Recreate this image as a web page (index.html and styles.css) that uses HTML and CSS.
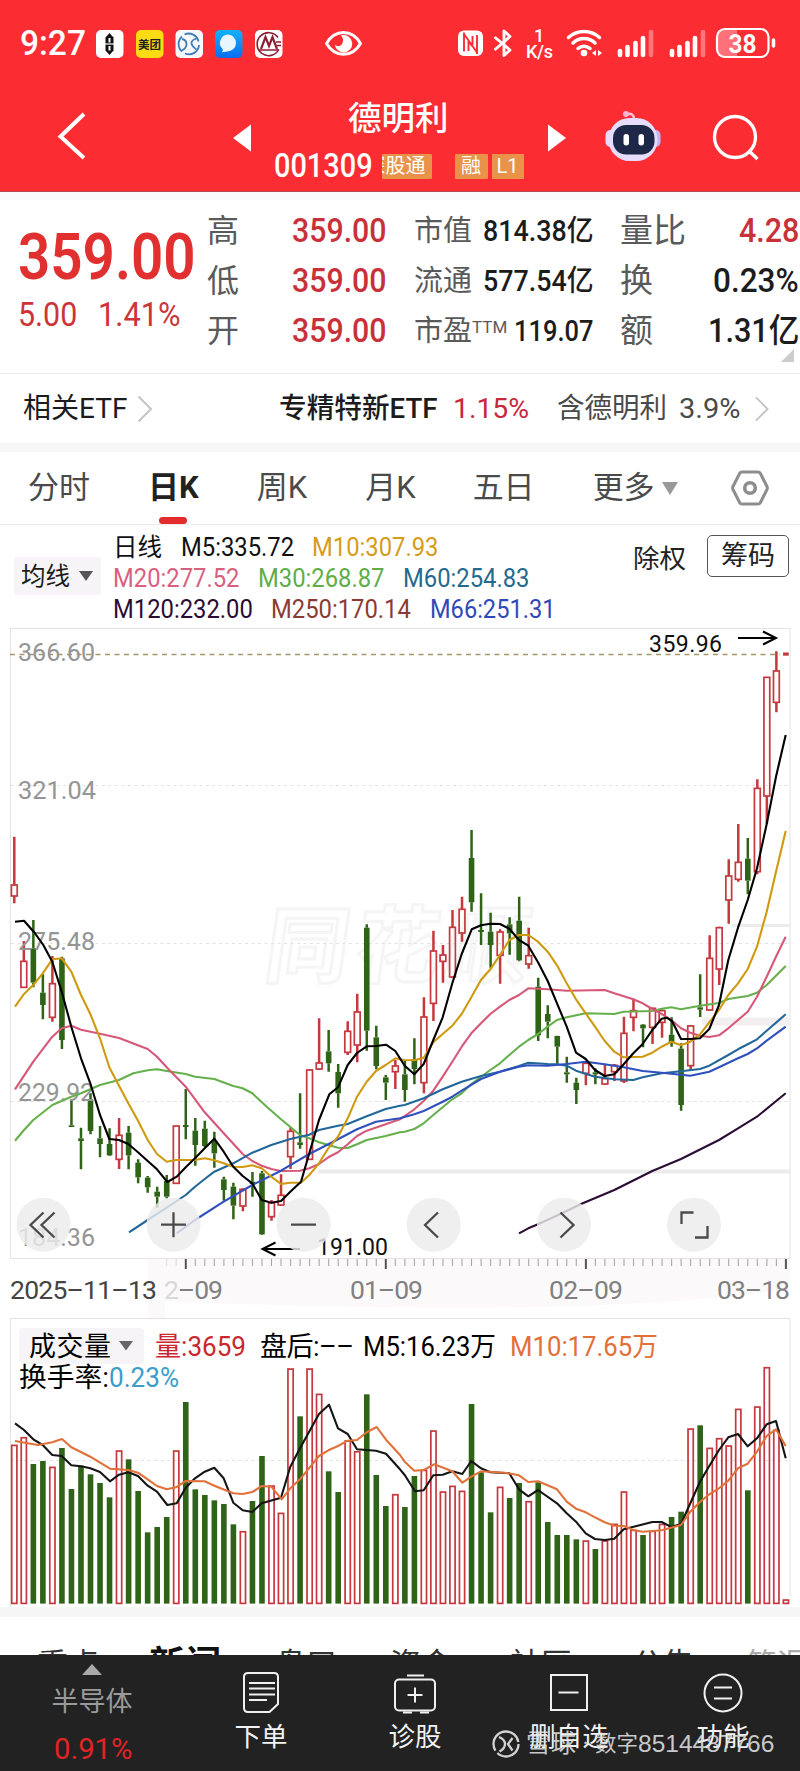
FILE: index.html
```html
<!DOCTYPE html>
<html lang="zh-CN">
<head>
<meta charset="utf-8">
<title>德明利 001309</title>
<link rel="stylesheet" href="styles.css">
</head>
<body>
<div class="app">
  <header class="top">
    <div class="status">
      <span class="clock" data-w="66">9:27</span>
      <svg class="apps" width="270" height="40" viewBox="94 23 270 40">
        <g>
          <rect x="96" y="29" width="27.5" height="28" rx="5" fill="#fff"/>
          <path d="M109.500 32l4 4.500v13l-4 4.500l-4-4.500v-13z" fill="#111"/>
          <path d="M109.500 37v4.500M109.500 45v4.500" stroke="#fff" stroke-width="2"/>
          <path d="M104 43h11" stroke="#fff" stroke-width="1.200"/>
        </g>
        <rect x="136" y="29" width="27.500" height="28" rx="5" fill="#fbdc12"/>
        <text x="138" y="47.500" class="mt" textLength="23">美团</text>
        <rect x="175.500" y="29" width="27.500" height="28" rx="5" fill="#f6f8fc"/>
        <g fill="none" stroke="#3d7db8" stroke-width="1.800">
          <path d="M182 35.500a10 10 0 0 0 0 15M184.500 33.500a10 10 0 0 1 14 7M199 44a10 10 0 0 1-14 8.500"/>
          <path d="M182 38q4.500 1 4.500 5t-4.500 6.500M196.500 37.500q-5 1.500-5 4.500t5 6.500"/>
        </g>
        <defs><linearGradient id="sky" x1="0" y1="0" x2="0" y2="1"><stop offset="0" stop-color="#12b2f8"/><stop offset="1" stop-color="#0a6df0"/></linearGradient></defs>
        <rect x="215" y="29" width="27.500" height="28" rx="5" fill="url(#sky)"/>
        <path d="M228 33.500a8.500 8.500 0 1 1 -1 17l-5 .8 1-2.800a8.500 8.500 0 0 1 5-15z" fill="#e8f7ff"/>
        <rect x="255" y="29" width="27.500" height="28" rx="5" fill="#fff"/>
        <g fill="none" stroke="#8d1f35">
          <path d="M278 36.500a11.500 11.500 0 1 0 .8 12" stroke-width="1.600"/>
          <path d="M261 48l4.500-12 3.500 9 3.500-9 4.500 12" stroke-width="2.200"/>
          <path d="M259 49h20M276 41h5M277 44.500h4" stroke-width="1.500"/>
        </g>
        <path d="M326.500 42.500c4-7 10-11 17-11s13 4 17 11c-4 7-10 10.800-17 10.800s-13-4-17-10.800z" fill="none" stroke="#fff" stroke-width="3"/>
        <path d="M343.500 34a8.700 8.700 0 1 1-8.600 9.500c2 2.500 6 2 7.500-1 1.300-3 .8-6-1.500-8z" fill="#fff"/>
      </svg>
      <svg class="sys" width="330" height="40" viewBox="454 23 330 40">
        <rect x="458" y="29.500" width="25" height="25.500" rx="6" fill="#fff"/>
        <path d="M464 31.500v19M477 34v19M464 33l13 18.500M468.500 50V40l4 5.500M472.500 35v9" fill="none" stroke="#fb2d33" stroke-width="1.900"/>
        <path d="M494.500 36l15.500 13-6 5.500V30l6 5.500-15.500 13.500" fill="none" stroke="#fff" stroke-width="2.900" stroke-linejoin="round"/>
        <text x="534" y="40.500" class="net">1</text>
        <text x="526" y="57" class="net" textLength="27">K/s</text>
        <g fill="none" stroke="#fff" stroke-width="3.500" stroke-linecap="round">
          <path d="M568.500 36.500a23 23 0 0 1 31 0M573 42a16 16 0 0 1 22 0M578 47.500a9 9 0 0 1 12 0"/>
        </g>
        <circle cx="584" cy="52" r="3.300" fill="#fff"/>
        <path d="M596 49v6l-4-3zM598 49v6l4-3z" fill="#fff"/>
        <g stroke="#fff" stroke-width="4.600" stroke-linecap="round">
          <path d="M620 50v4M627.500 46v8M635.500 42v12M643 37v17"/><path d="M651 31v23" opacity=".35"/>
          <path d="M672 50v4M679.500 46v8M687.500 42v12M695 37v17"/><path d="M703 31v23" opacity=".35"/>
        </g>
        <path d="M723 28.500h14v27h-14a6 6 0 0 1-6-6v-15a6 6 0 0 1 6-6z" fill="#ff7178"/>
        <rect x="717" y="28" width="51.500" height="28" rx="8" fill="none" stroke="#fff" stroke-width="2.200"/>
        <path d="M773.500 39v6" stroke="#fff" stroke-width="3.500" stroke-linecap="round"/>
        <text x="728.500" y="51.500" class="bat" textLength="28" lengthAdjust="spacingAndGlyphs">38</text>
      </svg>
    </div>
    <div class="titlebar">
      <svg class="back" width="30" height="52" viewBox="57 110 30 52"><path d="M84 114L60.500 136.500L84 158" fill="none" stroke="#fff" stroke-width="4"/></svg>
      <svg class="prev" width="20" height="28" viewBox="0 0 20 28"><path d="M19 0.500v27L1 14z" fill="#fff"/></svg>
      <div class="name">
        <h1>德明利</h1>
        <div class="codeline">
          <span class="code" data-w="99">001309</span>
          <span class="tag cut"><i>深股通</i></span>
          <span class="tag rong">融</span>
          <span class="tag lvl">L1</span>
        </div>
      </div>
      <svg class="next" width="20" height="28" viewBox="0 0 20 28"><path d="M1 0.500v27L19 14z" fill="#fff"/></svg>
      <svg class="robot" width="58" height="54" viewBox="604 109 58 54">
        <path d="M627 114q7-1 7 5" fill="none" stroke="#ffc0d8" stroke-width="2.500"/><circle cx="626" cy="114" r="3" fill="#ffb6cc"/>
        <rect x="605.500" y="130" width="12" height="17" rx="5" fill="#e9d9ff"/><rect x="648.500" y="130" width="12" height="17" rx="5" fill="#c3b4fb"/>
        <rect x="608.500" y="118" width="49" height="43" rx="21" fill="#e6dcfb"/>
        <rect x="613" y="125" width="41.500" height="29.500" rx="13" fill="#1d2748"/>
        <rect x="623.500" y="134" width="5.500" height="11.500" rx="2.700" fill="#fff"/><rect x="638.500" y="134" width="5.500" height="11.500" rx="2.700" fill="#fff"/>
      </svg>
      <svg class="search" width="48" height="48" viewBox="712 113 48 48"><circle cx="735" cy="137" r="20.500" fill="none" stroke="#fff" stroke-width="3.300"/><path d="M749 151l8.500 8" stroke="#fff" stroke-width="3.500"/></svg>
    </div>
  </header>

  <section class="quote">
    <div class="price">
      <div class="last"><span data-w="178">359.00</span></div>
      <div class="chg"><span data-w="59">5.00</span><span class="pct" data-w="83">1.41%</span></div>
    </div>
    <div class="col c1">
      <div><b>高</b><span class="red" data-w="95">359.00</span></div>
      <div><b>低</b><span class="red" data-w="95">359.00</span></div>
      <div><b>开</b><span class="red" data-w="95">359.00</span></div>
    </div>
    <div class="col c2">
      <div><b>市值</b><span data-w="110">814.38亿</span></div>
      <div><b>流通</b><span data-w="110">577.54亿</span></div>
      <div><b>市盈<sup>TTM</sup></b><span data-w="79">119.07</span></div>
    </div>
    <div class="col c3">
      <div><b>量比</b><span class="red" data-w="60">4.28</span></div>
      <div><b>换</b><span data-w="86">0.23%</span></div>
      <div><b>额</b><span data-w="91">1.31亿</span></div>
    </div>
    <i class="corner"></i>
  </section>

  <section class="etf">
    <span class="rel" data-w="104">相关ETF</span>
    <svg class="chev a" width="16" height="28" viewBox="0 0 16 28"><path d="M1.500 1.500L14 14L1.500 26.500" fill="none" stroke="#c4c4c4" stroke-width="2"/></svg>
    <span class="fund" data-w="159">专精特新ETF</span>
    <span class="up" data-w="76">1.15%</span>
    <span class="has" data-w="110">含德明利</span>
    <span class="hold" data-w="61">3.9%</span>
    <svg class="chev" width="16" height="26" viewBox="0 0 16 28"><path d="M1.500 1.500L14 14L1.500 26.500" fill="none" stroke="#c4c4c4" stroke-width="2"/></svg>
  </section>

  <nav class="periods">
    <span>分时</span><span class="on">日K</span><span>周K</span><span>月K</span><span>五日</span><span class="more">更多<i></i></span>
    <svg width="38" height="36" viewBox="0 0 38 36"><path d="M11 2h16q1.500 0 2.300 1.300L36 16.500q.7 1.500 0 3L29.300 32.700Q28.500 34 27 34H11q-1.500 0-2.300-1.300L2 19.500q-.7-1.500 0-3L8.700 3.300Q9.500 2 11 2z" fill="none" stroke="#8d8d8d" stroke-width="3"/><circle cx="19" cy="18" r="5.300" fill="none" stroke="#8d8d8d" stroke-width="3.600"/></svg>
  </nav>

  <section class="legend">
    <div class="pick">均线<i></i></div>
    <div class="mas">
      <div><span class="k">日线</span><span class="m5" data-w="113">M5:335.72</span><span class="m10" data-w="126">M10:307.93</span></div>
      <div><span class="m20" data-w="126">M20:277.52</span><span class="m30" data-w="126">M30:268.87</span><span class="m60" data-w="126">M60:254.83</span></div>
      <div><span class="m120" data-w="140">M120:232.00</span><span class="m250" data-w="140">M250:170.14</span><span class="m66" data-w="125">M66:251.31</span></div>
    </div>
    <div class="acts"><span>除权</span><span class="chip">筹码</span></div>
  </section>

  <svg id="kline" class="kline" width="800" height="690" viewBox="0 628 800 690">
    <path d="M148 1259h642v30q-200 30-625 12v17h-17z" fill="#fbf9fa"/>
    <rect x="10.500" y="628.500" width="779.500" height="630" fill="none" stroke="#e3e3e3"/>
    <text class="wm" transform="translate(262 976) skewX(-8)" textLength="264">同花顺</text>
    <g stroke="#e2e2e2" stroke-dasharray="3 3.500"><path d="M11 785.500h779M11 943.500h779M11 1101.500h779"/></g>
    <path d="M318 1171.500h472" stroke="#ebebeb" stroke-width="4"/>
    <path d="M732 925.500h58" stroke="#ececec" stroke-width="3"/>
    <path d="M702 1021.500h88" stroke="#f3eef0" stroke-width="8"/>
    <path d="M10 654.500h770" stroke="#a3966a" stroke-width="1.300" stroke-dasharray="5 4.500"/>
    <g id="candles"></g>
    <g class="ylab">
      <text x="18" y="661" textLength="77" lengthAdjust="spacingAndGlyphs">366.60</text>
      <text x="18" y="799" textLength="78" lengthAdjust="spacingAndGlyphs">321.04</text>
      <text x="18" y="950" textLength="77" lengthAdjust="spacingAndGlyphs">275.48</text>
      <text x="18" y="1101" textLength="76" lengthAdjust="spacingAndGlyphs">229.92</text>
      <text x="18" y="1246" textLength="77" lengthAdjust="spacingAndGlyphs">184.36</text>
    </g>
    <g id="averages"></g>
    <g fill="none" stroke="#000" stroke-width="2"><path d="M738 638h38M763 631.500l13 6.500-13 6.500"/><path d="M300 1249h-38M275.500 1242.500l-13 6.500 13 6.500"/></g>
    <g class="mark"><text x="649" y="651.500" textLength="73">359.96</text><text x="317" y="1255" textLength="71">191.00</text></g>
    <g fill="#ebebeb" fill-opacity=".82"><circle cx="43.500" cy="1224.700" r="27"/><circle cx="173.500" cy="1224.700" r="27"/><circle cx="303.500" cy="1224.700" r="27"/><circle cx="433.700" cy="1224.700" r="27"/><circle cx="564" cy="1224.700" r="27"/><circle cx="694" cy="1224.700" r="27"/></g>
    <g fill="none" stroke="#4a4a4a" stroke-width="2.300">
      <path d="M43.500 1212.500L30.500 1225l13 12.500M54.500 1212.500L41.500 1225l13 12.500"/>
      <path d="M161 1224.700h25M173.500 1212.200v25M291 1224.700h25"/>
      <path d="M438 1212.500L425 1225l13 12.500M560.500 1212.500l13 12.500-13 12.500"/>
      <path d="M681.500 1224v-11.500h12M695 1237.500h12.500V1226"/>
    </g>
    <g id="ticks"></g>
    <g class="dates">
      <text x="10" y="1299" class="dk" textLength="147">2025–11–13</text>
      <text x="164" y="1299" textLength="59"><tspan fill="#d8d8d8">2</tspan>–09</text>
      <text x="350" y="1299" textLength="73">01–09</text>
      <text x="549" y="1299" textLength="74">02–09</text>
      <text x="717" y="1299" textLength="73">03–18</text>
    </g>
  </svg>

  <svg class="vol" width="800" height="289" viewBox="0 1318 800 289">
    <path d="M10.500 1607V1318.500H790V1596" fill="none" stroke="#e3e3e3"/>
    <path d="M11 1460.500h779" stroke="#e2e2e2" stroke-dasharray="3 3.500"/>
    <g id="bars"></g>
    <rect x="19" y="1328" width="125" height="36" rx="4" fill="#f6f4f6"/>
    <path d="M119 1341h14l-7 9.500z" fill="#666"/>
    <g class="vtext">
      <text x="29" y="1356" textLength="82">成交量</text>
      <text x="155" y="1356" fill="#c8282e" textLength="91" lengthAdjust="spacingAndGlyphs">量:3659</text>
      <text x="260" y="1356" textLength="94">盘后:––</text>
      <text x="363" y="1356" textLength="133" lengthAdjust="spacingAndGlyphs">M5:16.23万</text>
      <text x="510" y="1356" fill="#e2703a" textLength="148" lengthAdjust="spacingAndGlyphs">M10:17.65万</text>
      <text x="19" y="1387" textLength="90" lengthAdjust="spacingAndGlyphs">换手率:</text>
      <text x="109" y="1387" fill="#3a9dcb" textLength="70" lengthAdjust="spacingAndGlyphs">0.23%</text>
    </g>
    <g id="volavg"></g>
  </svg>

  <div class="band"></div>
  <nav class="feeds">
    <span>重点</span><span class="on">新闻</span><span>盘口</span><span>资金</span><span>社区</span><span>公告</span><span class="fade">简况</span>
  </nav>

  <footer class="bar">
    <div class="sector"><i></i><span>半导体</span><em data-w="78">0.91%</em></div>
    <div class="act"><svg width="40" height="44" viewBox="0 0 40 44"><path d="M7 2h26q4 0 4 4v27l-8.500 8H7q-4 0-4-4V6q0-4 4-4z"/><path d="M8 12h26M8 17.500h26M8 23.500h26M8 29h18"/></svg><span>下单</span></div>
    <div class="act"><svg width="46" height="44" viewBox="0 0 46 44"><rect x="3" y="8.500" width="40" height="31" rx="4"/><path d="M15 4.500h17M11 41.500h9M28 41.500h9M23 16.500v15M15.500 24h15"/></svg><span>诊股</span></div>
    <div class="act"><svg width="40" height="44" viewBox="0 0 40 44"><rect x="2" y="4" width="36" height="35"/><path d="M9.500 21.500h20"/></svg><span>删自选</span></div>
    <div class="act"><svg width="42" height="44" viewBox="0 0 42 44"><circle cx="21" cy="22" r="18.500"/><path d="M12 16.500h18M12 27.500h18"/></svg><span>功能</span></div>
    <div class="mark-by">
      <svg width="30" height="30" viewBox="0 0 30 30"><circle cx="15" cy="15" r="12.500" fill="none" stroke="#d2d2d2" stroke-width="2.300" stroke-dasharray="29 3 44 3"/><path d="M8 8q6 2.500 6 7t-5.500 7.500M21.500 9l-4.500 6 4.500 6.500" fill="none" stroke="#d2d2d2" stroke-width="2.300"/></svg>
      <span class="xq">雪球</span><span class="dot">·</span><span class="usr">数字</span><span class="uid" data-w="136">8514487766</span>
    </div>
  </footer>
</div>
<script src="app.js"></script>
</body>
</html>
```
FILE: styles.css
```css
* { box-sizing: border-box; }
body { margin: 0; background: #fff; font-family: Roboto, "Noto Sans CJK SC", sans-serif; color: #1c1c1c; }
i, em { font-style: normal; }
svg { display: block; flex: none; }
.app { width: 800px; height: 1771px; overflow: hidden; display: flex; flex-direction: column; }
.app > * { flex: none; }
span { white-space: nowrap; }

.top { height: 192px; background: #fb2d33; color: #fff; border-bottom: 1px solid #b5494e; }
.status { height: 87px; display: flex; align-items: center; padding-left: 20px; }
.clock { font-size: 35px; font-weight: 500; line-height: 40px; }
.apps { margin-left: 8px; }
.sys { margin-left: 90px; }
.mt { font-size: 11.5px; font-weight: 700; fill: #222; }
.net { font-size: 18px; font-weight: 500; fill: #fff; }
.bat { font-size: 25px; font-weight: 700; fill: #fff; }
.titlebar { height: 104px; display: flex; align-items: flex-start; }
.back { margin: 23px 0 0 57px; }
.prev { margin: 37px 0 0 145px; }
.name { width: 276px; margin-left: 4px; padding-left: 18px; }
.name h1 { margin: 9px 0 0 74px; font-size: 33.5px; line-height: 46px; font-weight: 500; }
.codeline { display: flex; align-items: center; height: 32px; margin-top: 8px; }
.code { font-size: 33px; line-height: 32px; font-weight: 500; }
.tag { height: 25px; line-height: 24px; background: #e8924a; font-size: 20px; text-align: center; border-radius: 1px; }
.cut { width: 50px; margin-left: 9px; overflow: hidden; display: flex; justify-content: flex-end; padding-right: 6px; }
.rong { width: 33px; margin-left: 23px; }
.lvl { width: 32px; margin-left: 4px; }
.next { margin: 37px 0 0 15px; }
.robot { margin: 22px 0 0 37px; }
.search { margin: 26px 0 0 50px; }

.quote { height: 182px; border-top: 8px solid #fafafc; border-bottom: 1px solid #eeeef0; padding-top: 6px; display: flex; position: relative; }
.price { width: 207px; padding-left: 18px; color: #e0302f; }
.last { font-size: 64.5px; line-height: 80px; height: 80px; margin-top: 11px; font-weight: 600; }
.chg { font-size: 33px; line-height: 36px; color: #cc3438; display: flex; }
.pct { margin-left: 21px; }
.col > div { height: 50px; line-height: 50px; display: flex; justify-content: space-between; }
.col b { font-weight: 400; font-size: 32px; color: #5a5a5a; }
.col span { font-weight: 500; }
.c1 { width: 180px; font-size: 33.500px; }
.c2 { width: 179px; margin-left: 27px; font-size: 29px; }
.c2 b { font-size: 29px; }
.c3 { width: 179px; margin-left: 27px; font-size: 33px; }
.c3 b { font-size: 33px; }
.c2 sup { font-size: 17px; line-height: 0; vertical-align: 8px; }
.red { color: #c9313a; }
.corner { position: absolute; right: 6px; bottom: 11px; border-left: 13px solid transparent; border-bottom: 13px solid #ccc; }

.etf { height: 78px; border-bottom: 9px solid #f6f6f7; display: flex; align-items: center; padding: 0 0 0 23px; font-size: 28px; }
.etf span { line-height: 40px; }
.chev.a { margin-left: 10px; }
.fund { margin-left: 126px; font-weight: 500; }
.up { margin-left: 15px; color: #c8283c; }
.has { margin-left: 28px; color: #4a4a4a; }
.hold { margin: 0 14px 0 12px; color: #4a4a4a; }

.periods { height: 73px; border-bottom: 1px solid #ececec; display: flex; align-items: center; padding-left: 28px; font-size: 31px; color: #4a4a4a; line-height: 74px; position: relative; }
.periods span:nth-child(2) { margin-left: 58px; }
.periods span:nth-child(3) { margin-left: 58px; }
.periods span:nth-child(4) { margin-left: 58px; }
.periods span:nth-child(5) { margin-left: 57px; }
.periods .on { color: #222; font-weight: 700; position: relative; }
.periods .on::after { content: ""; position: absolute; left: 11px; bottom: 1px; width: 28px; height: 7px; border-radius: 3.500px; background: #e22c2e; }
.more { margin-left: 58px; display: flex; align-items: center; }
.more i { margin-left: 7px; border: 8.500px solid transparent; border-top: 13px solid #999; border-bottom: 0; }
.periods svg { margin-left: 53px; }

.legend { height: 103px; display: flex; font-size: 25.500px; }
.pick { width: 87px; height: 38px; margin: 32px 0 0 14px; background: #f6f4f6; border-radius: 3px; font-size: 24.500px; line-height: 37px; padding-left: 7px; display: flex; align-items: center; }
.pick i { margin-left: 9px; border: 7px solid transparent; border-top: 10px solid #555; border-bottom: 0; }
.mas { width: 480px; margin-left: 12px; padding-top: 7px; }
.mas > div { height: 31px; line-height: 31px; display: flex; gap: 18.500px; }
.k { font-size: 24.500px; }
.m5, .k { color: #111; } .m10 { color: #d59c1c; } .m20 { color: #d95f7f; } .m30 { color: #5fae47; }
.m60 { color: #236a91; } .m120 { color: #2b0c35; } .m250 { color: #8c3b34; } .m66 { color: #2f49b8; }
.acts { display: flex; margin: 10px 0 0 40px; font-size: 26.500px; line-height: 47px; gap: 21px; color: #222; }
.chip { width: 82px; height: 42px; line-height: 41px; border: 1px solid #555; border-radius: 5px; text-align: center; font-size: 27px; }

.wm { font-size: 84px; font-weight: 700; fill: #fff; stroke: #f5f5f6; stroke-width: 3; }
.ylab text { font-size: 26.500px; fill: #959595; }
.mark text { font-size: 23px; fill: #111; }
.dates text { font-size: 26.5px; fill: #808080; }
.dates .dk { fill: #444; }
.vtext text { font-size: 27px; }
.red-box { fill: none; stroke: #c4383e; stroke-width: 1.700; }
.red-line { stroke: #c4383e; stroke-width: 2.500; }
.green-box { fill: #2f6317; }
.green-line { stroke: #2f6317; stroke-width: 2.500; }
.avg { fill: none; stroke-width: 2.100; stroke-linejoin: round; }

.band { height: 10px; background: #f6f6f7; }
.feeds { height: 38px; overflow: hidden; position: relative; display: flex; padding: 25px 0 0 37px; line-height: 46px; font-size: 31px; color: #333; }
.feeds span { flex: none; }
.feeds .on { font-size: 36px; font-weight: 700; margin: 0 0 0 50px; color: #111; }
.feeds span:nth-child(3) { margin-left: 54px; }
.feeds span:nth-child(4) { margin-left: 53px; }
.feeds span:nth-child(5) { margin-left: 58px; }
.feeds span:nth-child(6) { margin-left: 60px; }
.feeds .fade { margin-left: 52px; color: #aaa; }

.bar { height: 116px; background: #222; color: #f2f2f2; display: flex; position: relative; font-size: 26.500px; }
.sector { width: 184px; display: flex; flex-direction: column; align-items: center; color: #9a9a9a; }
.sector i { margin-top: 9px; border: 10px solid transparent; border-bottom: 11px solid #aaa; border-top: 0; }
.sector span { line-height: 36px; margin-top: 9px; font-size: 27px; }
.sector em { line-height: 36px; margin-top: 11px; font-size: 30px; color: #e02424; }
.act { width: 154px; display: flex; flex-direction: column; align-items: center; padding-top: 16px; }
.act svg { fill: none; stroke: #f0f0f0; stroke-width: 2; }
.act span { line-height: 36px; margin-top: 4px; }
.mark-by { position: absolute; left: 491px; top: 73px; height: 32px; display: flex; align-items: center; color: rgba(225,225,225,.88); line-height: 32px; }
.xq { font-size: 25px; margin-left: 5px; }
.dot { font-size: 22px; width: 19px; text-align: center; }
.usr { font-size: 21.500px; }
.uid { font-family: "Liberation Sans", Arial, sans-serif; font-size: 24.500px; }
```
FILE: app.js
```js
document.querySelectorAll('[data-w]').forEach(function (el) {
  el.style.display = 'inline-block';
  el.style.flex = 'none';
  el.style.alignSelf = getComputedStyle(el.parentNode).flexDirection === 'column' ? 'flex-start' : '';
  var w = +el.dataset.w, n = el.offsetWidth;
  el.style.transformOrigin = '0 50%';
  el.style.transform = 'scaleX(' + w / n + ')';
  el.style.marginRight = (w - n) + (parseFloat(getComputedStyle(el).marginRight) || 0) + 'px';
  if (el.parentNode.className === 'sector') el.style.marginLeft = '54px';
});

var X0 = 14.3, STEP = 9.526;
function x(i) { return X0 + STEP * i; }

// colour, high, body top, body bottom, low (thirds of a pixel from the pane origin)
var K = `r -130 15 48 70|r 183 244 322 322|g 120 205 308 322|g 283 338 375 418|r 228 311 412 425|g 230 235 480 507|g 660 736 741 741|g 743 775 783 868|g 640 660 753 763|g 738 775 792 832|g 745 792 826 828|r 714 766 838 867|g 738 758 826 868|g 838 848 892 910|g 888 893 922 938|g 920 935 950 983|g 885 903 950 955|r 738 738 910 912|g 627 735 741 778|g 714 752 795 857|g 722 746 798 802|g 755 783 820 863|g 890 898 930 962|g 908 920 977 1018|r 925 928 978 994|g 876 905 912 950|g 873 880 1063 1065|r 960 968 1010 1022|r 883 946 975 977|r 742 754 830 867|g 640 787 795 806|r 567 570 838 840|r 415 549 567 569|g 450 514 550 575|g 552 576 640 683|r 424 454 517 525|r 341 396 495 547|g 133 143 452 512|g 437 472 558 568|g 585 592 608 660|r 540 558 575 627|g 540 583 630 665|g 475 538 567 613|r 352 411 608 640|r 152 213 370 423|r 195 225 244 308|r 90 142 291 293|r 50 88 159 185|g -150 -66 67 95|g 40 150 156 195|g 98 155 195 263|r 148 156 226 311|g 112 133 160 224|g 50 122 241 244|r 143 227 252 266|g 293 320 466 483|g 376 402 425 475|g 467 468 500 551|g 530 577 583 608|g 593 608 630 672|r 545 550 580 616|g 565 577 583 613|r 555 596 612 614|r 552 556 575 603|r 410 460 603 609|r 356 392 412 454|g 432 434 445 502|r 383 385 442 492|r 388 392 427 473|g 412 464 486 500|g 490 506 675 692|r 436 438 557 570|g 283 382 389 411|r 166 235 390 392|r 140 143 267 315|r -62 -12 60 131|r -168 -53 -2 5|g -126 -64 2 43|r -302 -275 -25 -17|r -609 -608 -252 -168|r -686 -627 -533 -503|r -681 -680 -676 -675`.split('|');
var out = '';
K.forEach(function (s, i) {
  var p = s.split(' '), c = p[0] === 'r' ? 'red' : 'green';
  var y = p.slice(1).map(function (v) { return 880 + v / 3; });
  out += '<path class="' + c + '-line" d="M' + x(i) + ' ' + y[0] + 'V' + y[1] + 'M' + x(i) + ' ' + y[2] + 'V' + y[3] + '"/>';
  var w = c === 'red' ? 5.8 : 5.6;
  if (i === 81) w = 4;
  out += '<rect class="' + c + '-box" x="' + (x(i) - w / 2) + '" y="' + y[1] + '" width="' + w + '" height="' + Math.max(1.5, y[2] - y[1]) + '"/>';
});
document.getElementById('candles').innerHTML = out;

function line(pts, color, base) {
  return '<path class="avg" stroke="' + color + '" d="M' + pts.split(';').map(function (p) {
    var a = p.split(',');
    return (a[0] / 3).toFixed(1) + ' ' + (base + a[1] / 3).toFixed(1);
  }).join('L') + '"/>';
}
var A = [
  ['1557,1060;1585,1045;1614,1033;1700,993;1743,972;1843,930;1957,873;2043,837;2157,780;2214,745;2271,710;2357,640', '#2b0c35'],
  ['45,782;72,750;100,720;157,675;214,650;243,640;300,615;357,600;400,580;443,571;471,568;500,573;557,582;585,590;643,597;700,618;728,625;757,640;800,680;843,718;900,765;928,775;957,787;1014,803;1043,804;1071,793;1100,780;1157,768;1200,757;1214,755;1243,747;1271,730;1300,705;1357,658;1385,640;1414,612;1471,570;1500,550;1528,525;1557,500;1585,480;1614,462;1643,440;1671,420;1700,412;1757,400;1843,402;1871,395;1957,393;1985,386;2014,382;2043,388;2100,377;2157,369;2185,357;2243,348;2271,338;2300,315;2357,258', '#66b04c'],
  ['45,628;100,545;157,470;185,445;214,437;243,449;300,461;357,474;443,507;471,530;500,562;557,620;614,697;671,760;728,822;757,843;785,857;814,867;843,873;900,872;928,865;957,852;985,832;1014,817;1043,793;1071,768;1100,752;1157,733;1200,718;1214,708;1243,688;1271,663;1300,632;1328,590;1357,545;1385,500;1414,460;1443,430;1471,402;1500,380;1528,360;1557,345;1585,325;1643,328;1700,332;1814,330;1843,340;1900,358;1928,370;1957,387;1985,402;2014,420;2043,445;2071,458;2100,467;2128,471;2157,466;2185,445;2214,420;2243,395;2271,350;2300,290;2328,230;2357,170', '#d65878'],
  ['387,1057;443,1020;500,983;557,945;585,920;614,897;643,875;700,850;757,818;814,795;871,777;928,764;957,750;1014,737;1043,732;1100,709;1157,687;1200,677;1214,675;1271,655;1328,628;1385,605;1443,588;1500,575;1557,558;1585,548;1643,552;1671,553;1700,557;1728,572;1785,590;1843,598;1900,600;1928,592;1985,580;2043,574;2100,567;2128,557;2185,525;2214,508;2243,493;2271,478;2300,452;2357,403', '#22679a'],
  ['530,1060;585,1020;671,965;757,915;843,872;928,822;1014,778;1071,748;1128,725;1200,715;1243,703;1271,693;1328,665;1357,650;1385,632;1443,597;1500,575;1557,560;1585,556;1643,557;1700,552;1757,545;1814,553;1871,562;1928,573;1985,578;2071,587;2128,575;2157,562;2214,535;2243,522;2271,505;2300,482;2357,440', '#2f50bd'],
  ['45,380;72,342;100,315;128,280;157,238;185,235;214,275;243,345;271,402;300,475;328,562;357,617;385,670;414,722;443,780;471,822;500,845;528,840;585,840;614,835;643,841;671,850;700,860;728,861;757,856;785,865;814,890;843,912;871,908;903,908;928,885;957,850;985,805;1014,770;1043,715;1071,650;1100,605;1128,573;1157,555;1186,535;1200,538;1214,540;1243,541;1271,533;1300,487;1328,462;1357,437;1385,402;1414,352;1443,300;1471,268;1500,225;1528,180;1557,165;1585,165;1614,185;1643,215;1671,256;1700,310;1728,358;1757,400;1785,440;1814,483;1843,515;1871,532;1928,530;1957,518;1985,500;2014,485;2043,496;2071,485;2100,463;2128,427;2157,390;2185,345;2214,310;2243,267;2271,200;2300,95;2328,-25;2357,-147', '#cf9a10'],
  ['45,125;72,122;105,160;130,195;157,245;185,335;214,440;243,535;271,610;300,705;328,777;357,780;385,792;414,817;443,843;471,868;502,906;530,890;557,862;585,835;614,805;643,776;671,815;700,860;728,888;757,910;785,960;814,968;843,963;871,935;903,905;928,820;957,720;988,643;1014,622;1043,555;1071,519;1100,499;1128,498;1158,494;1186,513;1214,557;1243,583;1271,552;1300,480;1328,412;1357,310;1385,222;1415,148;1443,136;1471,131;1500,132;1528,146;1557,180;1585,197;1614,247;1643,303;1671,370;1700,440;1728,518;1757,537;1785,570;1814,588;1843,583;1871,553;1900,520;1928,492;1957,450;1985,416;2000,413;2016,423;2043,477;2071,477;2100,475;2128,447;2157,375;2185,240;2214,143;2243,60;2271,-35;2300,-168;2328,-310;2357,-435', '#000']
];
document.getElementById('averages').innerHTML = A.map(function (a) { return line(a[0], a[1], 880); }).join('');

out = '';
for (var i = 16; i < 82; i++) {
  var major = (i - 18) % 21 === 0;
  out += '<path d="M' + x(i).toFixed(1) + ' 1259v' + (major ? 10 : 7) + '" stroke="' + (major ? '#555' : i < 18 ? '#ddd' : '#a8a8a8') + '" stroke-width="' + (major ? 2 : 1.1) + '"/>';
}
document.getElementById('ticks').innerHTML = out;

var V = 'r405 r382 g462 g453 r471 g414 g537 g467 g493 g519 g562 r422 g448 g543 g667 g651 g621 r422 g276 g538 g555 g571 g582 g643 r664 g573 g438 r527 r609 r176 g319 r176 r252 g484 g546 r392 r424 g253 g495 g588 r553 g591 g498 r480 r362 r545 r528 r543 g282 g487 g607 r531 g564 g519 r574 g517 g636 g675 g675 g688 r692 g717 r692 r642 r545 r660 g675 r663 r642 g621 g605 r356 g346 r414 r385 r407 r297 g541 r290 r172 r360 r869'.split(' ');
out = '';
V.forEach(function (s, i) {
  var red = s[0] === 'r', y = 1310 + s.slice(1) / 3, w = red ? 5.2 : 5.6;
  out += '<rect class="' + (red ? 'red' : 'green') + '-box" x="' + (x(i) - w / 2) + '" y="' + (red ? y + 0.4 : y) + '" width="' + w + '" height="' + ((red ? 1603 : 1603.6) - y) + '"/>';
});
document.getElementById('bars').innerHTML = out;
document.getElementById('volavg').innerHTML =
  line('45,340;72,360;100,388;128,405;157,435;185,438;214,466;243,469;271,475;300,486;330,514;357,494;385,487;414,498;443,527;471,545;502,585;530,580;557,533;585,505;614,485;643,473;671,505;700,578;728,601;757,606;785,580;843,563;871,470;900,415;957,312;987,284;1014,355;1043,372;1071,418;1128,422;1158,431;1200,478;1214,495;1245,544;1271,541;1300,496;1328,494;1357,484;1387,492;1414,453;1443,475;1471,487;1528,490;1557,538;1585,559;1614,540;1671,580;1700,610;1728,635;1757,670;1785,687;1814,690;1843,686;1871,658;1957,636;1985,636;2014,651;2043,642;2071,580;2100,515;2128,468;2157,420;2185,382;2214,372;2243,409;2271,385;2300,343;2328,333;2357,445', '#151515', 1310) +
  line('45,393;114,405;157,397;186,387;214,412;271,440;330,476;385,480;414,488;443,508;471,528;500,538;528,532;557,513;614,514;643,527;700,550;728,552;757,546;785,528;814,530;845,568;871,535;900,508;957,438;985,421;1014,408;1043,392;1071,390;1100,367;1130,351;1158,389;1200,435;1214,455;1243,482;1271,480;1302,463;1357,484;1387,518;1414,500;1443,484;1514,488;1557,496;1585,516;1614,514;1671,538;1700,575;1728,596;1757,607;1785,622;1814,637;1843,647;1871,648;1900,660;1928,665;1985,661;2043,645;2071,605;2100,576;2128,553;2157,535;2185,512;2214,475;2243,461;2271,425;2300,378;2328,358;2357,408', '#e0713a', 1310);
```
